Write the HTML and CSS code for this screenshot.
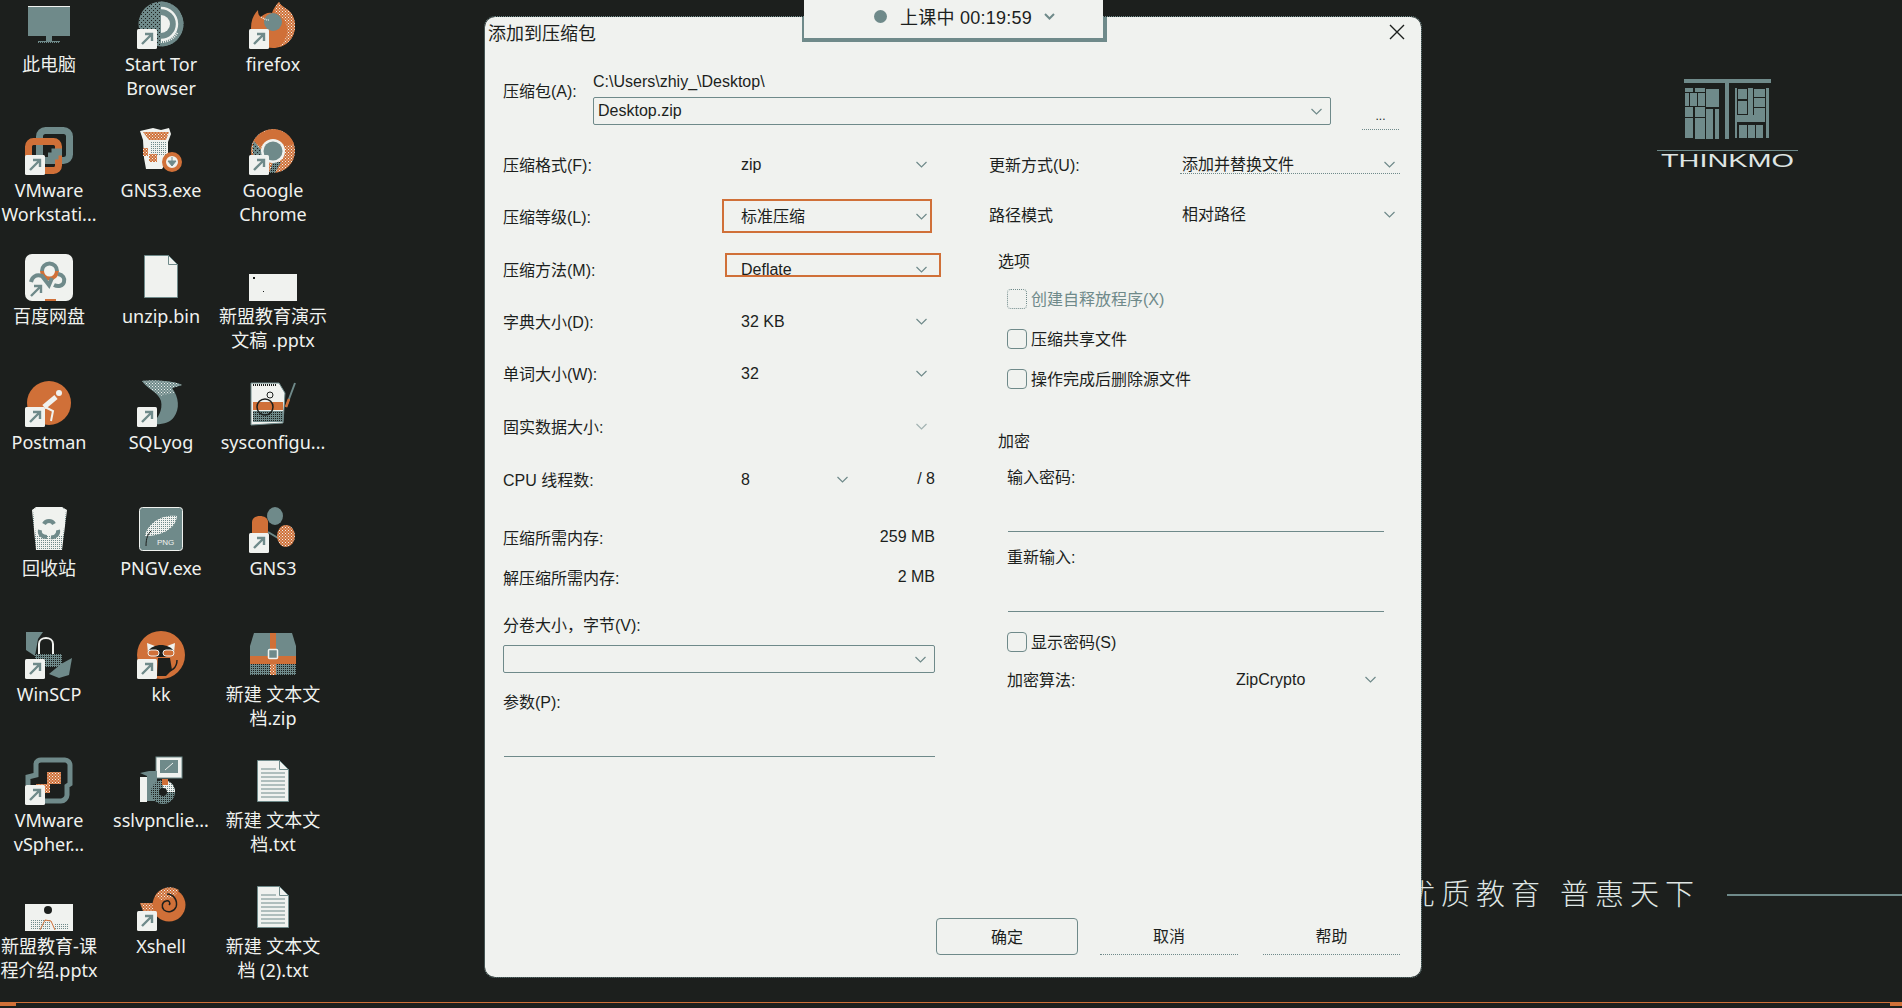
FILE: index.html
```html
<!doctype html>
<html lang="zh-CN">
    <head>
        <meta charset="UTF-8" />
        <title>添加到压缩包</title>
        <link rel="stylesheet" href="styles.css">
    </head>
    <body>
        <svg class="svg-defs" aria-hidden="true">
            <defs>
                <pattern id="dotOrange" width="3" height="3" patternUnits="userSpaceOnUse">
                    <rect width="3" height="3" fill="#d07038" />
                    <rect width="1" height="1" fill="#f0f2ef" />
                    <rect x="1.5" y="1.5" width="1" height="1" fill="#f0f2ef" />
                </pattern>
                <pattern id="dotSlate" width="4" height="4" patternUnits="userSpaceOnUse">
                    <rect width="4" height="4" fill="#6f8a8a" />
                    <rect width="1" height="1" fill="#1c1f1d" />
                    <rect x="2" y="2" width="1" height="1" fill="#1c1f1d" />
                </pattern>
                <pattern id="dotPale" width="3" height="3" patternUnits="userSpaceOnUse">
                    <rect width="3" height="3" fill="#6f8a8a" />
                    <rect width="1" height="1" fill="#f0f2ef" />
                    <rect x="1.5" y="1.5" width="1" height="1" fill="#f0f2ef" />
                </pattern>
                <pattern id="dotLight" width="2" height="2" patternUnits="userSpaceOnUse">
                    <rect width="2" height="2" fill="#f0f2ef" />
                    <rect width="1" height="1" fill="#6f8a8a" />
                </pattern>
                <pattern id="dotDark" width="2" height="2" patternUnits="userSpaceOnUse">
                    <rect width="2" height="2" fill="#6f8a8a" />
                    <rect width="1" height="1" fill="#1c1f1d" />
                </pattern>
                <symbol id="shortcut" viewBox="0 0 20 20">
                    <rect width="20" height="20" rx="1.5" fill="#f0f2ef" />
                    <path d="M5 15 14 6M8 5h7v7" fill="none" stroke="#6f8a8a" stroke-width="2.4" />
                </symbol>
                <symbol id="chev" viewBox="0 0 11 7">
                    <path d="M.5 1 5.5 6l5-5" fill="none" stroke="#6f8a8a" stroke-width="1.2" />
                </symbol>
                <symbol id="page" viewBox="0 0 32 42">
                    <path d="M.5.5h22l9 9v32H.5z" fill="#f0f2ef" stroke="#6f8a8a" />
                    <path d="M22.5.5v9h9" fill="none" stroke="#6f8a8a" />
                    <path d="M4 9h15M4 13h24M4 17h24M4 21h24M4 25h24M4 29h24M4 33h24M4 37h24" stroke="#6f8a8a" />
                </symbol>
            </defs>
        </svg>

        <div class="desktop">
            <div class="icon-grid">
                <div class="desk-icon">
                    <svg class="glyph" viewBox="0 0 48 48">
                        <rect x="3" y="4" width="42" height="30" fill="#6f8a8a" />
                        <rect x="3" y="4" width="42" height="1" fill="#f0f2ef" />
                        <rect x="21" y="34" width="6" height="5" fill="#6f8a8a" />
                        <rect x="13" y="39" width="22" height="2" fill="url(#dotDark)" />
                    </svg>
                    <div class="desk-label">此电脑</div>
                </div>
                <div class="desk-icon">
                    <svg class="glyph" viewBox="0 0 48 48">
                        <circle cx="24" cy="22" r="22.5" fill="url(#dotSlate)" />
                        <path d="M24 -.5a22.5 22.5 0 0 1 0 45z" fill="#6f8a8a" />
                        <path d="M24 13a9 9 0 0 1 0 18z" fill="#f0f2ef" />
                        <path d="M24 6a16 16 0 0 1 0 32" fill="none" stroke="#f0f2ef" stroke-width="2.4" />
                        <path d="M24 39.5a18 18 0 0 0 16-9" fill="none" stroke="#f0f2ef" stroke-width="3" stroke-dasharray="1 1" />
                        <use href="#shortcut" x="0" y="27" width="20" height="20" />
                    </svg>
                    <div class="desk-label">Start Tor<br>Browser</div>
                </div>
                <div class="desk-icon">
                    <svg class="glyph" viewBox="0 0 48 48">
                        <path d="M2 26C2 18 5 12 9 8c0 4 1 6 3 7 3-3 7-5 11-4 1-4 4-8 7-11 1 3 5 5 9 8 5 4 7 10 7 16 0 13-10 22-22 22S2 38 2 26z" fill="#d07038" />
                        <path d="M30 0c1 3 5 5 9 8 5 4 7 10 7 16 0 11-7 19-17 21 6-4 10-11 9-19-1-8-6-13-12-15-1-4 1-8 4-11z" fill="url(#dotOrange)" />
                        <circle cx="24" cy="20" r="9" fill="#6f8a8a" />
                        <path d="M12 15c3 2 5 3 8 3" fill="none" stroke="#f0f2ef" stroke-width="1.5" stroke-dasharray="1 1" />
                        <use href="#shortcut" x="0" y="27" width="20" height="20" />
                    </svg>
                    <div class="desk-label">firefox</div>
                </div>

                <div class="desk-icon">
                    <svg class="glyph" viewBox="0 0 48 48">
                        <rect x="14.5" y="2.5" width="30" height="30" rx="6" fill="none" stroke="#6f8a8a" stroke-width="7" />
                        <rect x="3.5" y="13.5" width="30" height="29" rx="5" fill="none" stroke="#d07038" stroke-width="7" />
                        <path d="M23 28h7v-4h7" fill="none" stroke="#6f8a8a" stroke-width="7" />
                        <use href="#shortcut" x="0" y="27" width="20" height="20" />
                    </svg>
                    <div class="desk-label">VMware<br>Workstati...</div>
                </div>
                <div class="desk-icon">
                    <svg class="glyph" viewBox="0 0 48 48">
                        <path d="M3 3 16 0l8 2 8-2 2 6-3 8v18l-6 9H9L7 30 6 12z" fill="#f0f2ef" />
                        <path d="M6 4h26l-3 8H12z" fill="url(#dotOrange)" />
                        <path d="M14 13h16v14H14z" fill="url(#dotLight)" />
                        <path d="M6 20h5v8H6zM12 26h8v8h-8z" fill="url(#dotOrange)" />
                        <circle cx="35" cy="34" r="8" fill="#f0f2ef" stroke="#d07038" stroke-width="4" />
                        <path d="M35 29v7M31 33l4 5 4-5z" fill="#6f8a8a" stroke="#6f8a8a" />
                    </svg>
                    <div class="desk-label">GNS3.exe</div>
                </div>
                <div class="desk-icon">
                    <svg class="glyph" viewBox="0 0 48 48">
                        <circle cx="24" cy="23" r="22" fill="url(#dotOrange)" />
                        <path d="M5 13A22 22 0 0 1 45 16L31 19a11 11 0 0 0-15 2z" fill="#d07038" />
                        <path d="M5 13l11 14 4 6-8 5A22 22 0 0 1 5 13z" fill="url(#dotSlate)" />
                        <path d="M24 34h8l-6 11h-6z" fill="url(#dotDark)" />
                        <circle cx="24" cy="23" r="12" fill="#f0f2ef" />
                        <circle cx="24" cy="23" r="9.5" fill="#6f8a8a" />
                        <use href="#shortcut" x="0" y="27" width="20" height="20" />
                    </svg>
                    <div class="desk-label">Google<br>Chrome</div>
                </div>

                <div class="desk-icon">
                    <svg class="glyph" viewBox="0 0 48 48">
                        <rect width="48" height="47" rx="7" fill="#f0f2ef" />
                        <path d="M17 17a7.5 7.5 0 0 1 15 0" fill="none" stroke="#6f8a8a" stroke-width="4" />
                        <path d="M17 17a7.5 7.5 0 0 0 15 0" fill="none" stroke="#d07038" stroke-width="4" />
                        <path d="M6 28c1-5 5-8 11-6l7 9 3-7" fill="none" stroke="#6f8a8a" stroke-width="4" />
                        <path d="M29 31c4 2 9 1 10-3 1-4-1-7-6-8" fill="none" stroke="#6f8a8a" stroke-width="4" />
                        <path d="M6 42 15 33M9 32h7v7" fill="none" stroke="#6f8a8a" stroke-width="2.4" />
                        <rect x="20" y="45" width="11" height="2" fill="#d07038" />
                    </svg>
                    <div class="desk-label">百度网盘</div>
                </div>
                <div class="desk-icon">
                    <svg class="glyph" viewBox="0 0 48 48">
                        <path d="M7.5 1.5h24l9 9v33h-33z" fill="#f0f2ef" stroke="#6f8a8a" />
                        <path d="M31.5 1.5v9h9" fill="none" stroke="#6f8a8a" />
                    </svg>
                    <div class="desk-label">unzip.bin</div>
                </div>
                <div class="desk-icon">
                    <svg class="glyph" viewBox="0 0 48 48">
                        <rect y="20" width="48" height="27" fill="#f0f2ef" />
                        <rect x="4" y="23" width="2" height="2" fill="#1c1f1d" />
                        <rect x="14" y="37" width="1" height="1" fill="#1c1f1d" />
                    </svg>
                    <div class="desk-label">新盟教育演示<br>文稿 .pptx</div>
                </div>

                <div class="desk-icon">
                    <svg class="glyph" viewBox="0 0 48 48">
                        <circle cx="24" cy="23" r="22" fill="#d07038" />
                        <circle cx="34" cy="13" r="3" fill="#f0f2ef" />
                        <path d="M31 17 19 27" stroke="#f0f2ef" stroke-width="5" />
                        <path d="M20 27l8 4-2 10" fill="none" stroke="#f0f2ef" stroke-width="2" />
                        <use href="#shortcut" x="0" y="27" width="20" height="20" />
                    </svg>
                    <div class="desk-label">Postman</div>
                </div>
                <div class="desk-icon">
                    <svg class="glyph" viewBox="0 0 48 48">
                        <path d="M5 1C14 0 34 0 45 5l-10 3c7 9 8 21 2 29-4 6-12 8-23 7 7-5 12-14 10-23C22 13 11 9 5 1z" fill="#6f8a8a" />
                        <path d="M5 1C14 0 34 0 45 5l-10 3 2 5-14 3C19 12 10 8 5 1z" fill="url(#dotPale)" />
                        <use href="#shortcut" x="0" y="27" width="20" height="20" />
                    </svg>
                    <div class="desk-label">SQLyog</div>
                </div>
                <div class="desk-icon">
                    <svg class="glyph" viewBox="0 0 48 48">
                        <path d="M2 3h28l6 10-2 30-32 2z" fill="#f0f2ef" stroke="#6f8a8a" />
                        <path d="M4 5h24" stroke="#1c1f1d" stroke-dasharray="1 1" stroke-width="2" />
                        <path d="M4 22h30v8H4z" fill="#d07038" />
                        <path d="M4 31h30v11H4z" fill="url(#dotDark)" />
                        <circle cx="16" cy="27" r="8" fill="none" stroke="#1c1f1d" stroke-width="1.5" />
                        <circle cx="21" cy="15" r="3" fill="none" stroke="#1c1f1d" />
                        <path d="M46 3 37 27" stroke="#6f8a8a" stroke-width="2" />
                        <path d="M40 19 37 27" stroke="#d07038" stroke-width="2.5" />
                    </svg>
                    <div class="desk-label">sysconfigu...</div>
                </div>

                <div class="desk-icon">
                    <svg class="glyph" viewBox="0 0 48 48">
                        <path d="M7 4l4-3h26l5 3-5 40H11z" fill="url(#dotLight)" />
                        <path d="M8 4l4-3h24l5 3-3 26H11z" fill="#f0f2ef" />
                        <path d="M19 18c2-4 8-4 10 0M33 24c1 4-3 8-7 7M15 24c-1 4 2 7 7 7" fill="none" stroke="#6f8a8a" stroke-width="4" />
                    </svg>
                    <div class="desk-label">回收站</div>
                </div>
                <div class="desk-icon">
                    <svg class="glyph" viewBox="0 0 48 48">
                        <rect x="2.5" y="1.5" width="43" height="43" rx="3" fill="#6f8a8a" stroke="#f0f2ef" />
                        <path d="M8 30C10 18 24 8 40 10c-1 12-14 20-32 20z" fill="url(#dotLight)" />
                        <path d="M9 40c0-8 2-12 5-15" fill="none" stroke="#1c1f1d" />
                        <text class="png-tag" x="20" y="39">PNG</text>
                    </svg>
                    <div class="desk-label">PNGV.exe</div>
                </div>
                <div class="desk-icon">
                    <svg class="glyph" viewBox="0 0 48 48">
                        <path d="M3 28V16c0-4 4-6 8-6s8 2 8 6v12z" fill="#d07038" />
                        <ellipse cx="26" cy="10" rx="8" ry="9" fill="#6f8a8a" />
                        <path d="M19 26l10 6" stroke="#6f8a8a" stroke-width="2" />
                        <ellipse cx="37" cy="30" rx="9" ry="11" fill="url(#dotOrange)" />
                        <use href="#shortcut" x="0" y="27" width="20" height="20" />
                    </svg>
                    <div class="desk-label">GNS3</div>
                </div>

                <div class="desk-icon">
                    <svg class="glyph" viewBox="0 0 48 48">
                        <path d="M1 0h17l-5 7-3 17-9-6z" fill="#6f8a8a" />
                        <path d="M10 22h27v13H10z" fill="url(#dotDark)" />
                        <path d="M14 22V12c0-8 14-8 14 0v10" fill="none" stroke="#f0f2ef" stroke-width="2" />
                        <path d="M36 32l11-6-3 17-10 3-10-4z" fill="#6f8a8a" />
                        <use href="#shortcut" x="0" y="27" width="20" height="20" />
                    </svg>
                    <div class="desk-label">WinSCP</div>
                </div>
                <div class="desk-icon">
                    <svg class="glyph" viewBox="0 0 48 48">
                        <circle cx="24" cy="23" r="24" fill="#d07038" />
                        <path d="M10 11l8 3-7 7zM38 11l-8 3 7 7z" fill="#f0f2ef" />
                        <path d="M11 20c2-5 8-7 13-7s11 2 13 7c-2 3-8 5-13 5s-11-2-13-5z" fill="#1c1f1d" />
                        <rect x="11" y="18" width="11" height="6" rx="3" fill="#d07038" stroke="#f0f2ef" />
                        <rect x="26" y="18" width="11" height="6" rx="3" fill="#d07038" stroke="#f0f2ef" />
                        <path d="M21 26h12l2 12-6 6H20z" fill="#1c1f1d" />
                        <path d="M40 28c0 8-6 12-11 11" fill="none" stroke="#1c1f1d" stroke-width="1.5" />
                        <use href="#shortcut" x="0" y="27" width="20" height="20" />
                    </svg>
                    <div class="desk-label">kk</div>
                </div>
                <div class="desk-icon">
                    <svg class="glyph" viewBox="0 0 48 48">
                        <path d="M5 1h38l4 13v10H1V14z" fill="#6f8a8a" />
                        <rect x="1" y="24" width="46" height="8" fill="#d07038" />
                        <rect x="1" y="32" width="46" height="11" fill="url(#dotDark)" />
                        <rect x="21" y="1" width="6" height="42" fill="#d07038" />
                        <rect x="21" y="32" width="6" height="11" fill="url(#dotOrange)" />
                        <rect x="19.5" y="17.5" width="9" height="9" rx="1" fill="#6f8a8a" stroke="#f0f2ef" stroke-width="1.5" />
                    </svg>
                    <div class="desk-label">新建 文本文<br>档.zip</div>
                </div>

                <div class="desk-icon">
                    <svg class="glyph" viewBox="0 0 48 48">
                        <path d="M3 27v-8l8-2V6c0-3 3-4 5-4h24c3 0 5 3 5 5v19l-3 2v9c0 3-3 6-6 6H20" fill="none" stroke="#6f8a8a" stroke-width="5" />
                        <path d="M22 14h14v12H22z" fill="url(#dotOrange)" />
                        <path d="M11 26h14v9h-7v10" fill="url(#dotOrange)" />
                        <use href="#shortcut" x="0" y="27" width="20" height="20" />
                    </svg>
                    <div class="desk-label">VMware<br>vSpher...</div>
                </div>
                <div class="desk-icon">
                    <svg class="glyph" viewBox="0 0 48 48">
                        <rect x="19" y="-1" width="26" height="21" fill="#f0f2ef" stroke="#6f8a8a" />
                        <rect x="23" y="2" width="18" height="13" fill="#6f8a8a" />
                        <path d="M28 12 36 5" stroke="#f0f2ef" />
                        <path d="M3 15l9-2h8v30H10V18z" fill="#6f8a8a" />
                        <rect x="3" y="19" width="7" height="25" fill="#f0f2ef" />
                        <circle cx="26" cy="34" r="12" fill="url(#dotDark)" />
                        <path d="M26 22a12 12 0 0 1 12 12H26z" fill="url(#dotLight)" />
                        <circle cx="26" cy="34" r="4" fill="#1c1f1d" />
                        <rect x="25" y="21" width="6" height="6" fill="#d07038" />
                    </svg>
                    <div class="desk-label">sslvpnclie...</div>
                </div>
                <div class="desk-icon">
                    <svg class="glyph" viewBox="0 0 48 48">
                        <use href="#page" x="8" y="2" width="32" height="42" />
                    </svg>
                    <div class="desk-label">新建 文本文<br>档.txt</div>
                </div>

                <div class="desk-icon">
                    <svg class="glyph" viewBox="0 0 48 48">
                        <rect y="20" width="48" height="27" fill="#f0f2ef" />
                        <circle cx="23" cy="26" r="4" fill="#1c1f1d" />
                        <path d="M5 35h20v11H5z" fill="url(#dotLight)" />
                        <path d="M15 46l5-10 6 1 4 9" fill="none" stroke="#d07038" />
                        <path d="M30 40h14v5H30z" fill="url(#dotLight)" />
                    </svg>
                    <div class="desk-label">新盟教育-课<br>程介绍.pptx</div>
                </div>
                <div class="desk-icon">
                    <svg class="glyph" viewBox="0 0 48 48">
                        <path d="M3 19h14l6 10-6 6H9z" fill="url(#dotOrange)" />
                        <circle cx="32" cy="21" r="16.5" fill="#d07038" />
                        <path d="M18 12a17 17 0 0 1 24-6l-6 8-12 2z" fill="url(#dotOrange)" />
                        <path d="M32 21c2-2 0-5-3-4-4 1-5 6-2 9 4 3 10 2 12-3 2-6-2-13-9-13" fill="none" stroke="#1c1f1d" stroke-width="1.5" />
                        <use href="#shortcut" x="0" y="27" width="20" height="20" />
                    </svg>
                    <div class="desk-label">Xshell</div>
                </div>
                <div class="desk-icon">
                    <svg class="glyph" viewBox="0 0 48 48">
                        <use href="#page" x="8" y="2" width="32" height="42" />
                    </svg>
                    <div class="desk-label">新建 文本文<br>档 (2).txt</div>
                </div>
            </div>

            <div class="brand">
                <svg class="brand-mark" viewBox="0 0 87 61">
                    <path d="M0 0h87v4H0zM41 4h4v56h-4zM1 9h8v4H1zM11 9h10v4H11zM22 10h13v18H22zM1 14h4v13H1zM6 14h7v13H6zM14 14h7v13h-7zM1 28h8v10H1zM11 28h10v10H11zM1 39h8v20H1zM11 39h10v21H11zM22 30h7v30h-7zM31 30h4v30h-4zM51 9h2v50h-2zM54 10h9v10h-9zM54 22h9v13h-9zM64 9h5v27h-5zM70 10h11v8H70zM70 19h11v9H70zM70 29h11v7H70zM82 9h3v50h-3zM51 36h30v7H51zM55 46h8v13h-8zM64 46h7v13h-7zM72 46h7v13h-7z" />
                </svg>
                <div class="brand-rule"></div>
                <svg class="brand-name" viewBox="0 0 141 16">
                    <text x="4" y="14" textLength="133" lengthAdjust="spacingAndGlyphs">THINKMO</text>
                </svg>
            </div>

            <div class="slogan">优质教育 普惠天下</div>
            <div class="slogan-rule"></div>

            <div class="dialog">
                <div class="title-bar">
                    <span class="title">添加到压缩包</span>
                    <svg class="close" viewBox="0 0 16 16">
                        <path d="M1 1l14 14M15 1 1 15" />
                    </svg>
                </div>

                <div class="archive-row">
                    <span class="archive-label">压缩包(A):</span>
                    <div>
                        <div class="archive-path">C:\Users\zhiy_\Desktop\</div>
                        <div class="combo combo-name">
                            <span>Desktop.zip</span>
                            <svg class="chev"><use href="#chev" /></svg>
                        </div>
                    </div>
                    <div class="browse">...</div>
                </div>

                <div class="columns">
                    <div class="col-left">
                        <div class="rows-left">
                            <div class="field">
                                <span>压缩格式(F):</span>
                                <div class="select"><span>zip</span><svg class="chev"><use href="#chev" /></svg></div>
                            </div>
                            <div class="field">
                                <span>压缩等级(L):</span>
                                <div class="select select-cjk"><span>标准压缩</span><svg class="chev"><use href="#chev" /></svg></div>
                            </div>
                            <div class="field">
                                <span>压缩方法(M):</span>
                                <div class="select"><span>Deflate</span><svg class="chev"><use href="#chev" /></svg></div>
                            </div>
                            <div class="field">
                                <span>字典大小(D):</span>
                                <div class="select"><span>32 KB</span><svg class="chev"><use href="#chev" /></svg></div>
                            </div>
                            <div class="field">
                                <span>单词大小(W):</span>
                                <div class="select"><span>32</span><svg class="chev"><use href="#chev" /></svg></div>
                            </div>
                            <div class="field">
                                <span>固实数据大小:</span>
                                <div class="select is-off"><span></span><svg class="chev"><use href="#chev" /></svg></div>
                            </div>
                            <div class="field">
                                <span>CPU 线程数:</span>
                                <div class="thread-group">
                                    <div class="select select-short"><span>8</span><svg class="chev"><use href="#chev" /></svg></div>
                                    <span>/ 8</span>
                                </div>
                            </div>
                            <div class="memory-row"><span>压缩所需内存:</span><span>259 MB</span></div>
                            <div class="memory-row"><span>解压缩所需内存:</span><span>2 MB</span></div>
                        </div>
                        <div class="text-line volume-label">分卷大小，字节(V):</div>
                        <div class="combo combo-volume">
                            <span></span>
                            <svg class="chev"><use href="#chev" /></svg>
                        </div>
                        <div class="text-line param-label">参数(P):</div>
                        <div class="line-input param-input"></div>
                    </div>

                    <div class="col-right">
                        <div class="field field-right">
                            <span>更新方式(U):</span>
                            <div class="select select-cjk select-dotted"><span>添加并替换文件</span><svg class="chev"><use href="#chev" /></svg></div>
                        </div>
                        <div class="field field-right">
                            <span>路径模式</span>
                            <div class="select select-cjk"><span>相对路径</span><svg class="chev"><use href="#chev" /></svg></div>
                        </div>
                        <div class="text-line group-title options-title">选项</div>
                        <div class="check-list">
                            <label class="check-row is-off"><span class="check"></span>创建自释放程序(X)</label>
                            <label class="check-row"><span class="check"></span>压缩共享文件</label>
                            <label class="check-row"><span class="check"></span>操作完成后删除源文件</label>
                        </div>
                        <div class="text-line group-title crypt-title">加密</div>
                        <div class="indent">
                            <div class="text-line pass-label">输入密码:</div>
                            <div class="line-input pass-input"></div>
                            <div class="text-line pass-label">重新输入:</div>
                            <div class="line-input pass-input"></div>
                            <label class="check-row show-pass"><span class="check"></span>显示密码(S)</label>
                            <div class="field field-crypt">
                                <span>加密算法:</span>
                                <div class="select"><span>ZipCrypto</span><svg class="chev"><use href="#chev" /></svg></div>
                            </div>
                        </div>
                    </div>
                </div>

                <div class="footer">
                    <button class="btn btn-ok">确定</button>
                    <button class="btn btn-cancel">取消</button>
                    <button class="btn btn-help">帮助</button>
                </div>

                <div class="mark mark-level"></div>
                <div class="mark mark-method"></div>
            </div>

            <div class="pill">
                <span class="pill-dot"></span>
                <span class="pill-text">上课中 00:19:59</span>
                <svg class="pill-chev" viewBox="0 0 11 7"><path d="M1 1l4.5 4.5L10 1" /></svg>
            </div>

            <div class="progress"></div>
        </div>
    </body>
</html>
```

FILE: styles.css
```css
* {
    box-sizing: border-box;
}
html,
body {
    margin: 0;
    height: 100%;
    overflow: hidden;
}
body {
    background-color: #1c1f1d;
    color: #1c1f1d;
    font-family: "Liberation Sans", "Noto Sans CJK SC", sans-serif;
    font-size: 16px;
}
.svg-defs {
    position: absolute;
    width: 0;
    height: 0;
}
.desktop {
    position: relative;
    width: 1902px;
    height: 1008px;
    overflow: hidden;
}

/* desktop icons */
.icon-grid {
    display: grid;
    grid-template-columns: repeat(3, 98px);
    grid-auto-rows: 126px;
    column-gap: 14px;
    padding-top: 2px;
}
.desk-icon {
    display: flex;
    flex-direction: column;
    align-items: center;
    white-space: nowrap;
}
.glyph {
    width: 48px;
    height: 48px;
    flex: none;
    overflow: visible;
}
.desk-label {
    margin-top: 2px;
    color: #f0f2ef;
    font-family: "Noto Sans", "Noto Sans CJK SC", sans-serif;
    font-size: 18px;
    line-height: 24px;
    text-align: center;
}
.png-tag {
    fill: #f0f2ef;
    font-size: 8px;
    font-family: "Liberation Sans", sans-serif;
}

/* brand in the wallpaper */
.brand {
    position: absolute;
    left: 1657px;
    top: 79px;
    width: 141px;
}
.brand-mark {
    display: block;
    width: 87px;
    height: 61px;
    margin-left: 27px;
    fill: #6f8a8a;
}
.brand-rule {
    height: 1px;
    margin-top: 10px;
    background-color: #6f8a8a;
}
.brand-name {
    display: block;
    width: 141px;
    height: 16px;
    margin-top: 2px;
    fill: #dfe5e3;
    font-size: 18px;
    font-family: "Liberation Sans", sans-serif;
}
.slogan {
    position: absolute;
    left: 1406px;
    top: 875px;
    color: #dfe5e3;
    font-size: 29px;
    font-weight: 200;
    line-height: 40px;
    letter-spacing: 6px;
    white-space: nowrap;
}
.slogan-rule {
    position: absolute;
    left: 1727px;
    right: 0;
    top: 894px;
    height: 2px;
    background-color: #6f8a8a;
}
.progress {
    position: absolute;
    left: 0;
    right: 0;
    top: 1002px;
    height: 1px;
    background-color: #d07038;
}
.progress::before,
.progress::after {
    content: "";
    position: absolute;
    top: 0;
    height: 4px;
    background-color: #d07038;
}
.progress::before {
    left: 0;
    width: 16px;
}
.progress::after {
    right: 0;
    width: 12px;
}

/* floating timer */
.pill {
    position: absolute;
    left: 804px;
    top: 0;
    display: flex;
    align-items: center;
    width: 299px;
    height: 38px;
    padding: 0 0 6px 70px;
    background-color: #f0f2ef;
    font-size: 18px;
}
.pill::before {
    content: "";
    position: absolute;
    left: -2px;
    right: -4px;
    top: 17px;
    bottom: -4px;
    border: solid #6f8a8a;
    border-width: 0 4px 4px 2px;
}
.pill-dot {
    width: 13px;
    height: 13px;
    margin-right: 13px;
    border-radius: 50%;
    background-color: #6f8a8a;
}
.pill-text {
    letter-spacing: 0.25px;
    white-space: nowrap;
}
.pill-chev {
    width: 11px;
    height: 7px;
    margin-left: 12px;
    fill: none;
    stroke: #6f8a8a;
    stroke-width: 2;
}

/* dialog */
.dialog {
    position: absolute;
    left: 485px;
    top: 17px;
    display: flex;
    flex-direction: column;
    width: 936px;
    height: 960px;
    padding: 0 21px 22px 18px;
    border-radius: 10px;
    background-color: #f0f2ef;
    outline: 1px dotted #6f8a8a;
}
.title-bar {
    display: flex;
    justify-content: space-between;
    align-items: center;
    height: 30px;
    margin-bottom: 2px;
    margin-left: -15px;
}
.title {
    font-size: 18px;
}
.close {
    width: 16px;
    height: 16px;
    margin-right: -5px;
    fill: none;
    stroke: #1c1f1d;
    stroke-width: 1.4;
}
.archive-row {
    display: grid;
    grid-template-columns: 90px 738px 68px;
    align-items: start;
    height: 58px;
    margin-top: 23px;
}
.archive-label {
    margin-top: 10px;
    line-height: 20px;
}
.archive-path {
    height: 20px;
    line-height: 20px;
    margin-bottom: 5px;
}
.combo {
    display: flex;
    justify-content: space-between;
    align-items: center;
    height: 28px;
    border: 1px solid #6f8a8a;
    border-radius: 2px;
}
.combo-name {
    padding: 0 8px 0 4px;
}
.combo-volume {
    margin-top: 9px;
    padding: 0 8px 0 4px;
}
.browse {
    display: flex;
    justify-content: center;
    align-items: center;
    width: 37px;
    height: 28px;
    margin: 30px 0 0 31px;
    border-bottom: 1px dotted #6f8a8a;
    font-size: 12px;
}
.columns {
    display: grid;
    grid-template-columns: 432px 411px;
    column-gap: 54px;
    margin-top: 9px;
}
.rows-left {
    display: grid;
    grid-template-rows: 50px 54px 52px 52px 52px 54px 52px 64px 16px;
}
.field {
    display: grid;
    grid-template-columns: 238px 1fr;
    align-items: center;
}
.select {
    display: flex;
    justify-content: space-between;
    align-items: center;
    padding-right: 8px;
}
.select > span {
    padding-top: 2px;
}
.select-cjk > span {
    padding: 0 0 3px;
}
.select.is-off .chev {
    opacity: 0.6;
}
.select-short {
    width: 107px;
    padding-right: 0;
}
.thread-group {
    display: flex;
    justify-content: space-between;
    align-items: center;
}
.memory-row {
    display: flex;
    justify-content: space-between;
    align-items: center;
}
.chev {
    width: 11px;
    height: 7px;
    flex: none;
}
.text-line {
    height: 20px;
    line-height: 20px;
}
.volume-label {
    margin-top: 31px;
}
.param-label {
    margin-top: 20px;
}
.line-input {
    border-bottom: 1px solid #6f8a8a;
}
.param-input {
    height: 44px;
    margin-left: 1px;
}

/* right column */
.field-right {
    grid-template-columns: 193px 1fr;
    height: 50px;
}
.field-right .select {
    padding-right: 5px;
}
.select-dotted {
    position: relative;
}
.select-dotted::after {
    content: "";
    position: absolute;
    left: -2px;
    right: 0;
    top: 22px;
    border-bottom: 1px dotted #6f8a8a;
}
.group-title {
    margin-left: 9px;
}
.options-title {
    margin-top: 13px;
}
.check-list {
    margin-top: 7px;
    margin-left: 18px;
}
.check-row {
    display: flex;
    align-items: center;
    gap: 4px;
    height: 40px;
    padding-bottom: 2px;
}
.check-row.is-off {
    color: #6f8a8a;
}
.check {
    width: 20px;
    height: 20px;
    margin-top: 2px;
    border: 1px solid #6f8a8a;
    border-radius: 4px;
}
.is-off .check {
    border-style: dotted;
}
.crypt-title {
    margin-top: 33px;
}
.indent {
    margin-left: 18px;
}
.pass-label {
    margin-top: 16px;
}
.pass-input {
    height: 44px;
    margin-left: 1px;
    margin-right: 16px;
}
.show-pass {
    height: 24px;
    margin-top: 18px;
}
.field-crypt {
    grid-template-columns: 229px 1fr;
    height: 20px;
    margin-top: 13px;
    margin-right: 24px;
}
.field-crypt .select {
    padding-right: 0;
}

/* footer buttons */
.footer {
    display: flex;
    justify-content: flex-end;
    margin-top: auto;
}
.btn {
    height: 37px;
    padding: 0 0 2px;
    border: none;
    background: none;
    color: #1c1f1d;
    font: inherit;
}
.btn-ok {
    width: 142px;
    border: 1px solid #6f8a8a;
    border-radius: 4px;
}
.btn-cancel {
    width: 138px;
    margin-left: 22px;
    border-bottom: 1px dotted #6f8a8a;
}
.btn-help {
    width: 137px;
    margin-left: 25px;
    border-bottom: 1px dotted #6f8a8a;
}

/* orange annotation boxes */
.mark {
    position: absolute;
    border: 2px solid #d07038;
}
.mark-level {
    left: 237px;
    top: 182px;
    width: 210px;
    height: 34px;
}
.mark-method {
    left: 240px;
    top: 236px;
    width: 216px;
    height: 24px;
}
```
